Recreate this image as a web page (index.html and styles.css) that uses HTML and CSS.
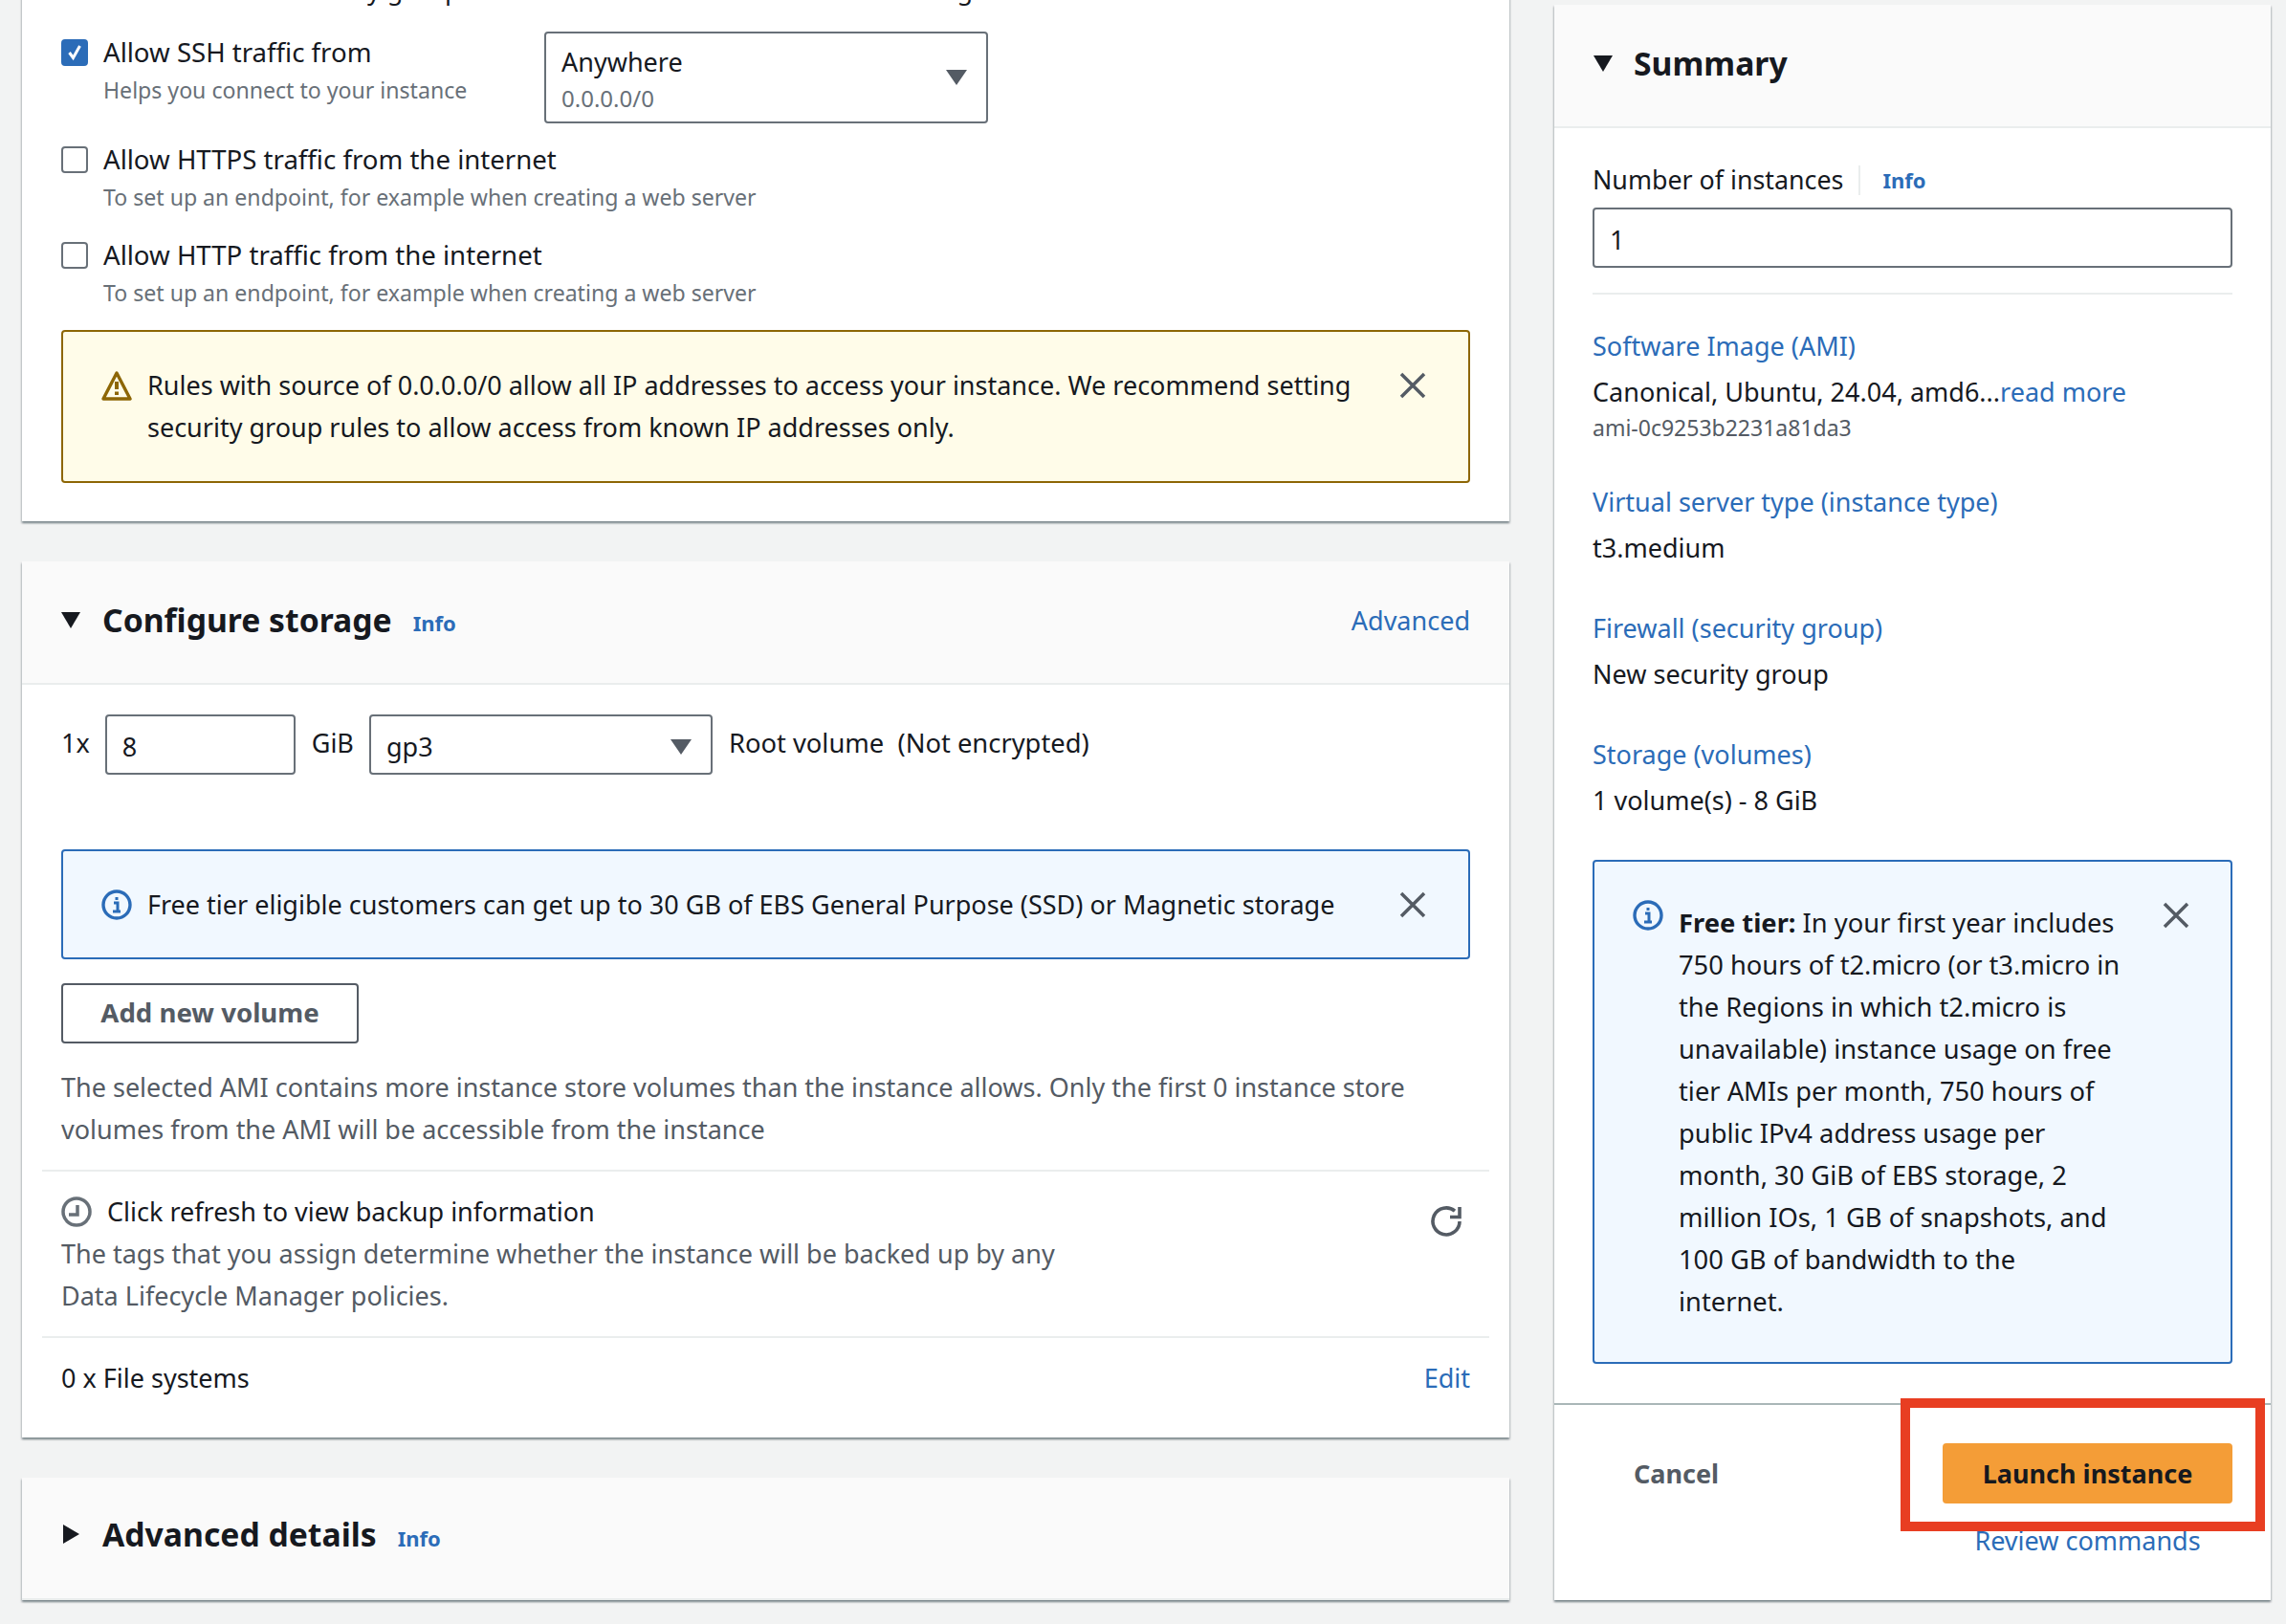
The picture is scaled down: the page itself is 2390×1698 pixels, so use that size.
FILE: index.html
```html
<!DOCTYPE html>
<html lang="en">
<head>
    <meta charset="UTF-8">
    <title>Launch an instance</title>
    <link rel="stylesheet" href="styles.css">
</head>
<body>
    <div class="layout">
        <div class="left-col">
            <section class="card card-network">
                <p class="intro">We'll create a new security group called 'launch-wizard-1' with the following rules:</p>

                <div class="rule">
                    <div class="rule-left">
                        <span class="checkbox checked">
                            <svg viewBox="0 0 28 28" width="28" height="28"><path d="M8.5 14l4 5.5L19.5 7" fill="none" stroke="#fff" stroke-width="3"/></svg>
                        </span>
                        <div>
                            <div class="rule-label">Allow SSH traffic from</div>
                            <div class="rule-help">Helps you connect to your instance</div>
                        </div>
                    </div>
                    <div class="select select-tall">
                        <div>
                            <div class="select-value">Anywhere</div>
                            <div class="select-sub">0.0.0.0/0</div>
                        </div>
                        <svg class="caret" viewBox="0 0 22 16" width="22" height="16"><path d="M0 0h22L11 16z"/></svg>
                    </div>
                </div>

                <div class="rule">
                    <div class="rule-left">
                        <span class="checkbox"></span>
                        <div>
                            <div class="rule-label">Allow HTTPS traffic from the internet</div>
                            <div class="rule-help">To set up an endpoint, for example when creating a web server</div>
                        </div>
                    </div>
                </div>

                <div class="rule">
                    <div class="rule-left">
                        <span class="checkbox"></span>
                        <div>
                            <div class="rule-label">Allow HTTP traffic from the internet</div>
                            <div class="rule-help">To set up an endpoint, for example when creating a web server</div>
                        </div>
                    </div>
                </div>

                <div class="alert alert-warning">
                    <svg class="alert-icon" viewBox="0 0 32 32" width="32" height="32">
                        <path d="M16 3L30 30H2z" fill="none" stroke="#8d6605" stroke-width="3.4" stroke-linejoin="round"/>
                        <path d="M16 12v8M16 22.5v3.5" stroke="#8d6605" stroke-width="4" fill="none"/>
                    </svg>
                    <div class="alert-text">Rules with source of 0.0.0.0/0 allow all IP addresses to access your instance. We recommend setting security group rules to allow access from known IP addresses only.</div>
                    <svg class="close" viewBox="0 0 28 28" width="28" height="28"><path d="M2 2l24 24M26 2L2 26"/></svg>
                </div>
            </section>

            <section class="card">
                <div class="card-header">
                    <svg class="tri-down" viewBox="0 0 20 17" width="20" height="17"><path d="M0 0h20L10 17z"/></svg>
                    <h2>Configure storage</h2>
                    <a class="info-link">Info</a>
                    <a class="link header-right">Advanced</a>
                </div>
                <div class="card-body storage-body">
                    <div class="volume-row">
                        <span>1x</span>
                        <div class="input input-size">8</div>
                        <span class="volume-unit">GiB</span>
                        <div class="select select-type">
                            <div class="select-value">gp3</div>
                            <svg class="caret" viewBox="0 0 22 16" width="22" height="16"><path d="M0 0h22L11 16z"/></svg>
                        </div>
                        <span class="volume-note">Root volume&nbsp; (Not encrypted)</span>
                    </div>

                    <div class="alert alert-info alert-free">
                        <svg class="alert-icon" viewBox="0 0 32 32" width="32" height="32">
                            <circle cx="16" cy="16" r="14" fill="none" stroke="#2b6cb8" stroke-width="3.4"/>
                            <path d="M13 14h4v8M12 23h8" fill="none" stroke="#2b6cb8" stroke-width="3"/>
                            <rect x="14.5" y="8" width="3" height="3" fill="#2b6cb8"/>
                        </svg>
                        <div class="alert-text">Free tier eligible customers can get up to 30 GB of EBS General Purpose (SSD) or Magnetic storage</div>
                        <svg class="close" viewBox="0 0 28 28" width="28" height="28"><path d="M2 2l24 24M26 2L2 26"/></svg>
                    </div>

                    <button class="btn-outline">Add new volume</button>

                    <p class="muted store-note">The selected AMI contains more instance store volumes than the instance allows. Only the first 0 instance store volumes from the AMI will be accessible from the instance</p>

                    <hr class="divider">

                    <div class="backup">
                        <div class="backup-text">
                            <div class="backup-title">
                                <svg viewBox="0 0 32 32" width="32" height="32">
                                    <circle cx="16" cy="16" r="14" fill="none" stroke="#687078" stroke-width="3.5"/>
                                    <path d="M17 9v10H8" fill="none" stroke="#687078" stroke-width="3.5"/>
                                </svg>
                                Click refresh to view backup information
                            </div>
                            <p class="muted">The tags that you assign determine whether the instance will be backed up by any<br>Data Lifecycle Manager policies.</p>
                        </div>
                        <svg class="refresh" viewBox="0 0 32 32" width="32" height="32">
                            <path d="M30 16A14 14 0 1 1 25 5.2" fill="none" stroke="#545b64" stroke-width="3.6"/>
                            <path d="M30 1v10.5H20" fill="none" stroke="#545b64" stroke-width="3.6"/>
                        </svg>
                    </div>

                    <hr class="divider">

                    <div class="file-row">
                        <span>0 x File systems</span>
                        <a class="link">Edit</a>
                    </div>
                </div>
            </section>

            <section class="card">
                <div class="card-header card-header-closed">
                    <svg class="tri-right" viewBox="0 0 17 20" width="17" height="20"><path d="M0 0l17 10L0 20z"/></svg>
                    <h2>Advanced details</h2>
                    <a class="info-link">Info</a>
                </div>
            </section>
        </div>

        <aside class="card summary">
            <div class="card-header">
                <svg class="tri-down" viewBox="0 0 20 17" width="20" height="17"><path d="M0 0h20L10 17z"/></svg>
                <h2>Summary</h2>
            </div>
            <div class="summary-body">
                <div class="field-label">
                    <span>Number of instances</span>
                    <a class="info-link">Info</a>
                </div>
                <div class="input input-count">1</div>
                <hr class="summary-line">

                <div class="summary-group">
                    <a class="link">Software Image (AMI)</a>
                    <div class="summary-value">Canonical, Ubuntu, 24.04, amd6...<a class="link">read more</a></div>
                    <div class="ami-id">ami-0c9253b2231a81da3</div>
                </div>
                <div class="summary-group">
                    <a class="link">Virtual server type (instance type)</a>
                    <div class="summary-value">t3.medium</div>
                </div>
                <div class="summary-group">
                    <a class="link">Firewall (security group)</a>
                    <div class="summary-value">New security group</div>
                </div>
                <div class="summary-group">
                    <a class="link">Storage (volumes)</a>
                    <div class="summary-value">1 volume(s) - 8 GiB</div>
                </div>

                <div class="alert alert-info alert-tier">
                    <svg class="alert-icon" viewBox="0 0 32 32" width="32" height="32">
                        <circle cx="16" cy="16" r="14" fill="none" stroke="#2b6cb8" stroke-width="3.4"/>
                        <path d="M13 14h4v8M12 23h8" fill="none" stroke="#2b6cb8" stroke-width="3"/>
                        <rect x="14.5" y="8" width="3" height="3" fill="#2b6cb8"/>
                    </svg>
                    <div class="alert-text"><b>Free tier:</b> In your first year includes 750 hours of t2.micro (or t3.micro in the Regions in which t2.micro is unavailable) instance usage on free tier AMIs per month, 750 hours of public IPv4 address usage per month, 30 GiB of EBS storage, 2 million IOs, 1 GB of snapshots, and 100 GB of bandwidth to the internet.</div>
                    <svg class="close" viewBox="0 0 28 28" width="28" height="28"><path d="M2 2l24 24M26 2L2 26"/></svg>
                </div>
            </div>
            <div class="summary-footer">
                <span class="cancel">Cancel</span>
                <div class="launch">
                    <button class="btn-primary">Launch instance</button>
                    <a class="link">Review commands</a>
                </div>
                <div class="highlight"></div>
            </div>
        </aside>
    </div>
</body>
</html>
```

FILE: styles.css
```css
* {
    margin: 0;
    padding: 0;
    box-sizing: border-box;
}

html, body {
    height: 1698px;
    overflow: hidden;
}

body {
    background-color: #f2f3f3;
    color: #16191f;
    font-family: "Noto Sans", Arial, sans-serif;
    font-size: 27px;
    line-height: 44px;
}

.layout {
    display: flex;
    align-items: flex-start;
    gap: 47px;
    padding-left: 23px;
}

.left-col {
    width: 1555px;
    margin-top: -30px;
    display: flex;
    flex-direction: column;
    gap: 42px;
}

.card {
    background-color: #fff;
    box-shadow: 0 2px 2px 0 rgba(0, 28, 36, 0.3), 1px 2px 2px 0 rgba(0, 28, 36, 0.15), -1px 2px 2px 0 rgba(0, 28, 36, 0.15);
}

.link {
    color: #2b6cb8;
}

.muted {
    color: #545b64;
}


/* network card */
.card-network {
    padding: 2px 41px 40px;
    display: flex;
    flex-direction: column;
    gap: 17px;
}

.intro {
    margin-top: -5px;
    margin-bottom: 5px;
}

.rule {
    display: flex;
}

.rule-left {
    width: 505px;
    display: flex;
    gap: 16px;
    white-space: nowrap;
}

.rule-label {
    font-size: 27.6px;
    margin-top: -1px;
    margin-bottom: 1px;
}

.checkbox {
    flex: none;
    width: 28px;
    height: 28px;
    margin-top: 8px;
    border: 2px solid #687078;
    border-radius: 4px;
    background-color: #fff;
}

.checkbox svg {
    display: block;
    margin: -2px;
}

.checkbox.checked {
    background-color: #2b6cb8;
    border-color: #2b6cb8;
}

.rule-help {
    color: #687078;
    font-size: 23.1px;
    line-height: 34px;
    padding-bottom: 5px;
}

.select,
.input {
    background-color: #fff;
    border: 2px solid #687078;
    border-radius: 4px;
    height: 63px;
}

.select {
    display: flex;
    align-items: center;
    justify-content: space-between;
    padding: 0 20px 0 16px;
}

.select-tall {
    width: 464px;
    height: 96px;
    margin-bottom: -1px;
    padding-top: 3px;
}

.select-tall .caret {
    margin-top: -3px;
}

.select-value {
    line-height: 40px;
}

.select-sub {
    color: #687078;
    font-size: 24px;
    line-height: 36px;
}

.caret {
    fill: #545b64;
}


/* alerts */
.alert {
    display: flex;
    border: 2px solid;
    border-radius: 4px;
}

.alert-text {
    flex: 1;
}

.alert-icon {
    flex: none;
    margin-right: 16px;
}

.close {
    flex: none;
    fill: none;
    stroke: #545b64;
    stroke-width: 3.5;
}

.alert-warning {
    border-color: #8d6605;
    background-color: #fffce9;
    padding: 34px 44px 34px 40px;
}

.alert-warning .alert-icon {
    margin-top: 6px;
}

.alert-warning .close {
    margin: 8px 0 0 22px;
}

.alert-info {
    border-color: #2b6cb8;
    background-color: #f1f8ff;
}


/* section headers */
.card-header {
    height: 129px;
    background-color: #fafafa;
    border-bottom: 2px solid #eaeded;
    padding: 0 41px 5px;
    display: flex;
    align-items: center;
}

.card-header h2 {
    font-size: 33.7px;
    font-weight: 700;
    margin-left: 23px;
    margin-right: 22px;
}

.summary .card-header h2 {
    margin-left: 22px;
}

.tri-down {
    fill: #16191f;
}

.tri-right {
    fill: #16191f;
    margin-left: 2px;
    margin-right: 1px;
}

.info-link {
    color: #2b6cb8;
    font-size: 22px;
    font-weight: 700;
    margin-top: 5px;
}

.header-right {
    margin-left: auto;
    margin-top: 2px;
}


/* storage */
.storage-body {
    padding: 31px 41px 40px;
}

.volume-row {
    display: flex;
    align-items: center;
    gap: 16px;
    white-space: nowrap;
}

.volume-row > span {
    padding-bottom: 3px;
}

.volume-unit {
    margin-left: 1px;
}

.volume-note {
    margin-left: 1px;
    font-size: 27.33px;
}

.input {
    display: flex;
    align-items: center;
    padding: 4px 16px 0;
}

.input-size {
    width: 199px;
}

.select-type {
    width: 359px;
    padding-top: 4px;
}

.alert-free {
    height: 115px;
    margin-top: 78px;
    padding: 0 44px 0 40px;
    align-items: center;
}

.btn-outline {
    display: block;
    width: 311px;
    height: 63px;
    margin-top: 25px;
    padding-bottom: 3px;
    background-color: #fff;
    color: #545b64;
    border: 2px solid #545b64;
    border-radius: 4px;
    font-family: inherit;
    font-size: 27.6px;
    font-weight: 700;
}

.store-note {
    margin-top: 24px;
}

.divider {
    border: none;
    border-top: 2px solid #eaeded;
    margin: 20px -20px;
}

.backup {
    display: flex;
    justify-content: space-between;
}

.backup-title {
    display: flex;
    align-items: center;
    gap: 16px;
}

.refresh {
    margin-right: 9px;
    margin-top: 16px;
}

.file-row {
    display: flex;
    justify-content: space-between;
}

.card-header-closed {
    height: 128px;
    padding-bottom: 8px;
}

.card-header-closed .info-link {
    margin-top: 7px;
}


/* summary panel */
.summary {
    width: 749px;
    margin-top: 5px;
}

.summary-body {
    padding: 32px 40px 41px;
    border-bottom: 2px solid #aab7b8;
}

.field-label {
    display: flex;
    align-items: center;
    font-size: 26.8px;
}

.field-label .info-link {
    margin: 0 0 0 16px;
    padding-left: 23px;
    line-height: 31px;
    border-left: 2px solid #eaeded;
}

.input-count {
    margin-top: 7px;
}

.summary-line {
    border: none;
    border-top: 2px solid #eaeded;
    margin-top: 26px;
}

.summary-group {
    margin-top: 40px;
}

.summary-line + .summary-group {
    margin-top: 32px;
}

.summary-value {
    margin-top: 4px;
}

.ami-id {
    color: #545b64;
    font-size: 23px;
    line-height: 30px;
    padding-bottom: 1px;
}

.alert-tier {
    margin-top: 40px;
    padding: 42px 44px 41px 40px;
}

.alert-tier .alert-icon {
    margin-top: -2px;
    margin-right: 16px;
}

.alert-tier .alert-text {
    flex: none;
    width: 465px;
    font-size: 27.3px;
}

.alert-tier .close {
    margin-left: 41px;
}

.summary-footer {
    position: relative;
    height: 204px;
    padding: 40px 40px 0 83px;
    display: flex;
    justify-content: space-between;
}

.cancel {
    color: #545b64;
    font-weight: 700;
    line-height: 63px;
}

.launch {
    width: 303px;
    text-align: center;
}

.btn-primary {
    display: block;
    width: 100%;
    height: 63px;
    margin-bottom: 17px;
    background-color: #f49d37;
    color: #16191f;
    border: none;
    border-radius: 4px;
    font-family: inherit;
    font-size: 27px;
    font-weight: 700;
}

.highlight {
    position: absolute;
    left: 362px;
    top: -7px;
    width: 381px;
    height: 139px;
    border: 10px solid #e83e22;
}
```
